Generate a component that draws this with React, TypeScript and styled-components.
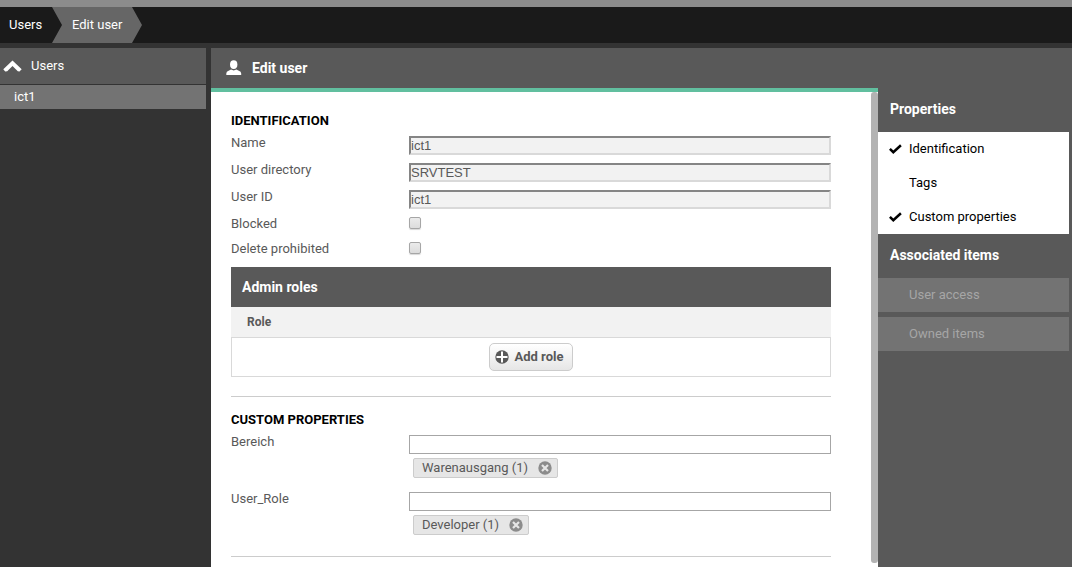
import React from "react";
import styled, { createGlobalStyle } from "styled-components";

const GlobalStyle = createGlobalStyle`
  *, *::before, *::after { box-sizing: border-box; }
  body {
    margin: 0;
    background: #333333;
    font-family: Roboto, "Liberation Sans", sans-serif;
    font-size: 13px;
    line-height: 16px;
    color: #595959;
  }
  h1, h2, h3, ul, ol { margin: 0; padding: 0; }
  ul, ol { list-style: none; }
`;

const Page = styled.div`
  display: flex;
  flex-direction: column;
  min-height: 100vh;
  border-top: 7px solid #8c8c8c;
`;

const Breadcrumbs = styled.nav`
  display: flex;
  height: 36px;
  background: #1a1a1a;
`;

const Crumb = styled.a<{ $current?: boolean }>`
  display: flex;
  align-items: center;
  width: ${(p) => (p.$current ? 90 : 52)}px;
  padding-left: ${(p) => (p.$current ? 20 : 9)}px;
  background: ${(p) => (p.$current ? "#666666" : "#1a1a1a")};
  clip-path: ${(p) =>
    p.$current ? "polygon(0 0, 80px 0, 100% 50%, 80px 100%, 0 100%, 10px 50%)" : "none"};
  color: #ffffff;
  text-decoration: none;
  white-space: nowrap;
`;

const Workspace = styled.div`
  display: flex;
  flex: 1;
  gap: 5px;
  padding-top: 5px;
`;

const Sidebar = styled.aside`
  width: 206px;
  flex-shrink: 0;
  color: #ffffff;
`;

const SidebarToggle = styled.button`
  display: flex;
  align-items: center;
  gap: 9px;
  width: 100%;
  height: 36px;
  margin-bottom: 1px;
  padding: 0 0 0 3px;
  border: 0;
  background: #595959;
  color: inherit;
  font: inherit;
`;

const SidebarItem = styled.a`
  display: block;
  padding: 4px 14px;
  background: #737373;
  color: inherit;
  text-decoration: none;
`;

const Editor = styled.div`
  display: flex;
  flex-direction: column;
  flex: 1;
  min-width: 0;
  background: #595959;
`;

const EditorHeader = styled.header`
  display: flex;
  align-items: center;
  gap: 10px;
  height: 40px;
  padding-left: 15px;
  color: #ffffff;
`;

const Title = styled.h1`
  font-size: 14px;
  font-weight: 700;
`;

const EditorBody = styled.div`
  display: flex;
  flex: 1;
`;

const FormPanel = styled.main`
  display: flex;
  flex: 1;
  min-width: 0;
  border-top: 4px solid #61bf9f;
  background: #ffffff;
`;

const Form = styled.form`
  flex: 1;
  min-width: 0;
  padding: 19px 40px 10px 20px;
`;

const ScrollThumb = styled.div`
  width: 7px;
  margin-bottom: 4px;
  border-radius: 3px;
  background: #b3b3b3;
`;

const SectionTitle = styled.h2`
  margin-bottom: 4px;
  color: #000000;
  font-size: 13px;
  font-weight: 700;
  line-height: 20px;
  text-transform: uppercase;
`;

const Field = styled.div<{ $height: number }>`
  display: grid;
  grid-template-columns: 178px 1fr;
  align-items: start;
  min-height: ${(p) => p.$height}px;
`;

const FieldControl = styled.div`
  display: flex;
  flex-direction: column;
  align-items: flex-start;
  padding-top: 1px;
`;

const TextInput = styled.input`
  width: 100%;
  height: 19px;
  padding: 0 1px;
  border: 1px solid #a6a6a6;
  background: #ffffff;
  color: #595959;
  font: 13px "Liberation Sans", Arial, sans-serif;

  &:read-only {
    padding: 0;
    border: 2px solid;
    border-color: #858585 #d9d9d9 #d9d9d9 #858585;
    background: #f2f2f2;
  }
`;

const Checkbox = styled.input`
  appearance: none;
  width: 12px;
  height: 12px;
  margin: 0;
  border: 1px solid #a6a6a6;
  border-radius: 2px;
  background: linear-gradient(#ebebeb, #dcdcdc);
  box-shadow: 0 1px 1px #d9d9d9;
`;

const RolesTitle = styled.h3`
  margin-top: 1px;
  padding: 12px 11px;
  background: #595959;
  color: #ffffff;
  font-size: 14px;
  font-weight: 700;
`;

const RolesTable = styled.table`
  width: 100%;
  border-spacing: 0;

  th {
    height: 30px;
    padding: 0 16px;
    background: #f2f2f2;
    font-size: 12px;
    text-align: left;
  }

  td {
    height: 40px;
    padding: 0;
    border: 1px solid #d9d9d9;
    text-align: center;
  }
`;

const AddButton = styled.button`
  display: inline-flex;
  align-items: center;
  gap: 6px;
  height: 28px;
  padding: 0 9px 1px 5px;
  border: 1px solid #cccccc;
  border-radius: 5px;
  background: linear-gradient(#ffffff, #e6e6e6);
  color: #595959;
  font: 700 13px Roboto, sans-serif;
  vertical-align: middle;
`;

const Divider = styled.hr<{ $top: number }>`
  height: 1px;
  margin: ${(p) => p.$top}px 0 13px;
  border: 0;
  background: #cccccc;

  &:last-child { margin-bottom: 0; }
`;

const Chip = styled.span`
  display: flex;
  align-items: center;
  gap: 10px;
  height: 20px;
  margin: 4px 0 0 4px;
  padding: 0 5px 0 8px;
  border: 1px solid #cccccc;
  border-radius: 2px;
  background: #e6e6e6;
`;

const ChipRemove = styled.button`
  display: flex;
  padding: 0;
  border: 0;
  background: none;
`;

const PropertyPanel = styled.aside`
  width: 194px;
  flex-shrink: 0;
  padding-right: 3px;
`;

const PanelTitle = styled.h2`
  padding: 13px 12px 15px;
  color: #ffffff;
  font-size: 14px;
  font-weight: 700;
`;

const PropertyList = styled.ul`
  background: #ffffff;
`;

const PropertyToggle = styled.button`
  display: grid;
  grid-template-columns: 20px 1fr;
  align-items: center;
  width: 100%;
  height: 34px;
  padding: 0 0 0 11px;
  border: 0;
  background: none;
  color: #000000;
  font: inherit;
  text-align: left;
`;

const PropertyName = styled.span`
  grid-column: 2;
`;

const AssociatedList = styled.ul`
  display: flex;
  flex-direction: column;
  gap: 5px;
`;

const AssociatedButton = styled.button`
  width: 100%;
  height: 34px;
  padding: 0 0 0 31px;
  border: 0;
  background: #737373;
  color: #a6a6a6;
  font: inherit;
  text-align: left;
`;

const ChevronUpIcon = () => (
  <svg width="19" height="12" viewBox="0 0 19 12" aria-hidden="true">
    <path d="M0.300 9.300 L9.500 0.500 L18.700 9.300 L16.500 11.500 L14.800 11.300 L9.500 6 L4.200 11.300 L2.200 11.500 Z" fill="#ffffff" />
  </svg>
);

const UserIcon = () => (
  <svg width="16" height="16" viewBox="0 0 16 16" fill="#ffffff" aria-hidden="true">
    <ellipse cx="7.700" cy="4.600" rx="3.700" ry="4.400" />
    <path d="M0.300 15 V13.400 Q0.300 11.600 2.600 10.800 L5 9.600 Q7.700 11.200 10.400 9.600 L12.800 10.800 Q15.200 11.600 15.200 13.400 V15 Z" />
  </svg>
);

const CheckIcon = () => (
  <svg width="13" height="10" viewBox="0 0 13 10" aria-hidden="true">
    <path d="M0.900 4.900 L4.300 8.200 L11.900 1.300" fill="none" stroke="#000000" strokeWidth="2.500" />
  </svg>
);

const PlusIcon = () => (
  <svg width="14" height="14" viewBox="0 0 14 14" aria-hidden="true">
    <circle cx="7" cy="7" r="6.700" fill="#595959" />
    <path d="M7 1.500 V12.500 M1.500 7 H12.500" stroke="#ffffff" strokeWidth="2" />
  </svg>
);

const RemoveIcon = () => (
  <svg width="14" height="14" viewBox="0 0 14 14" aria-hidden="true">
    <circle cx="7" cy="7" r="6.700" fill="#8c8c8c" />
    <path d="M4 4 L10 10 M10 4 L4 10" stroke="#e6e6e6" strokeWidth="2.200" />
  </svg>
);

const identification = [
  { id: "name", label: "Name", value: "ict1" },
  { id: "directory", label: "User directory", value: "SRVTEST" },
  { id: "userid", label: "User ID", value: "ict1" },
];

const flags = [
  { id: "blocked", label: "Blocked" },
  { id: "delete-prohibited", label: "Delete prohibited" },
];

const customProperties = [
  { id: "bereich", label: "Bereich", tag: "Warenausgang (1)" },
  { id: "user-role", label: "User_Role", tag: "Developer (1)" },
];

const properties = [
  { name: "Identification", active: true },
  { name: "Tags", active: false },
  { name: "Custom properties", active: true },
];

export default function App() {
  return (
    <>
      <GlobalStyle />
      <Page>
        <Breadcrumbs>
          <Crumb href="#users">Users</Crumb>
          <Crumb href="#edit" $current>Edit user</Crumb>
        </Breadcrumbs>
        <Workspace>
          <Sidebar>
            <SidebarToggle type="button"><ChevronUpIcon />Users</SidebarToggle>
            <SidebarItem href="#ict1">ict1</SidebarItem>
          </Sidebar>
          <Editor>
            <EditorHeader>
              <UserIcon />
              <Title>Edit user</Title>
            </EditorHeader>
            <EditorBody>
              <FormPanel>
                <Form>
                  <SectionTitle>Identification</SectionTitle>
                  {identification.map((f) => (
                    <Field key={f.id} $height={27}>
                      <label htmlFor={f.id}>{f.label}</label>
                      <FieldControl>
                        <TextInput id={f.id} type="text" value={f.value} readOnly />
                      </FieldControl>
                    </Field>
                  ))}
                  {flags.map((f) => (
                    <Field key={f.id} $height={25}>
                      <label htmlFor={f.id}>{f.label}</label>
                      <FieldControl>
                        <Checkbox id={f.id} type="checkbox" />
                      </FieldControl>
                    </Field>
                  ))}
                  <RolesTitle id="roles-title">Admin roles</RolesTitle>
                  <RolesTable aria-labelledby="roles-title">
                    <thead>
                      <tr><th scope="col">Role</th></tr>
                    </thead>
                    <tbody>
                      <tr>
                        <td>
                          <AddButton type="button"><PlusIcon />Add role</AddButton>
                        </td>
                      </tr>
                    </tbody>
                  </RolesTable>
                  <Divider $top={19} />
                  <SectionTitle>Custom properties</SectionTitle>
                  {customProperties.map((f) => (
                    <Field key={f.id} $height={57}>
                      <label htmlFor={f.id}>{f.label}</label>
                      <FieldControl>
                        <TextInput id={f.id} type="text" />
                        <Chip>
                          {f.tag}
                          <ChipRemove type="button" aria-label={`Remove ${f.tag}`}>
                            <RemoveIcon />
                          </ChipRemove>
                        </Chip>
                      </FieldControl>
                    </Field>
                  ))}
                  <Divider $top={8} />
                </Form>
                <ScrollThumb />
              </FormPanel>
              <PropertyPanel>
                <PanelTitle>Properties</PanelTitle>
                <PropertyList>
                  {properties.map((p) => (
                    <li key={p.name}>
                      <PropertyToggle type="button" aria-pressed={p.active}>
                        {p.active && <CheckIcon />}
                        <PropertyName>{p.name}</PropertyName>
                      </PropertyToggle>
                    </li>
                  ))}
                </PropertyList>
                <PanelTitle>Associated items</PanelTitle>
                <AssociatedList>
                  <li><AssociatedButton type="button">User access</AssociatedButton></li>
                  <li><AssociatedButton type="button">Owned items</AssociatedButton></li>
                </AssociatedList>
              </PropertyPanel>
            </EditorBody>
          </Editor>
        </Workspace>
      </Page>
    </>
  );
}
